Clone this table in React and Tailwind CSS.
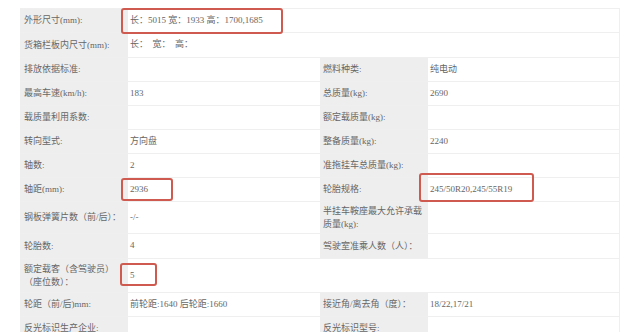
import React from 'react';

const font = { fontFamily: '"Liberation Serif", "Noto Sans CJK SC", serif' };

const rows = [
  { h: 'h-[24px]', l1: '外形尺寸(mm):', v1: '长：5015 宽：1933 高：1700,1685', wide: true },
  { h: 'h-[25px]', l1: '货箱栏板内尺寸(mm):', v1: '长：  宽：  高：', wide: true },
  { h: 'h-[24px]', l1: '排放依据标准:', v1: '', l2: '燃料种类:', v2: '纯电动' },
  { h: 'h-[24px]', l1: '最高车速(km/h):', v1: '183', l2: '总质量(kg):', v2: '2690' },
  { h: 'h-[24px]', l1: '载质量利用系数:', v1: '', l2: '额定载质量(kg):', v2: '' },
  { h: 'h-[24px]', l1: '转向型式:', v1: '方向盘', l2: '整备质量(kg):', v2: '2240' },
  { h: 'h-[24px]', l1: '轴数:', v1: '2', l2: '准拖挂车总质量(kg):', v2: '' },
  { h: 'h-[24px]', l1: '轴距(mm):', v1: '2936', l2: '轮胎规格:', v2: '245/50R20,245/55R19' },
  { h: 'h-[32px]', l1: '钢板弹簧片数（前/后）：', v1: '-/-', l2: <>半挂车鞍座最大允许承载<br />质量(kg):</>, v2: '' },
  { h: 'h-[25px]', l1: '轮胎数:', v1: '4', l2: '驾驶室准乘人数（人）：', v2: '' },
  { h: 'h-[34px]', l1: <>额定载客（含驾驶员）<br />（座位数）：</>, v1: '5', blankRight: true },
  { h: 'h-[24px]', l1: '轮距（前/后)mm:', v1: '前轮距:1640 后轮距:1660', l2: '接近角/离去角（度）：', v2: '18/22,17/21' },
  { h: 'h-[24px]', l1: '反光标识生产企业:', v1: '', l2: '反光标识型号:', v2: '' },
];

function Row({ row }) {
  return (
    <div className={`flex border-b border-[#efefef] ${row.h}`}>
      <div className="w-[108px] shrink-0 bg-[#eeeeee] pl-[4px] flex items-center leading-[13px]">{row.l1}</div>
      {row.wide ? (
        <div className="flex-1 pl-[2px] flex items-center whitespace-pre">{row.v1}</div>
      ) : (
        <>
          <div className="w-[192px] shrink-0 pl-[2px] flex items-center">{row.v1}</div>
          {row.blankRight ? (
            <div className="flex-1" />
          ) : (
            <>
              <div className="w-[108px] shrink-0 bg-[#eeeeee] pl-[3px] flex items-center leading-[13px]">{row.l2}</div>
              <div className="flex-1 pl-[2px] flex items-center">{row.v2}</div>
            </>
          )}
        </>
      )}
    </div>
  );
}

export default function App() {
  return (
    <div className="w-[640px] h-[332px] overflow-hidden bg-white pt-[8px] pl-[20px]" style={font}>
      <div className="relative w-[600px] border-t border-r border-[#efefef] text-[9px] text-[#666666]">
        {rows.map((row, i) => (
          <Row key={i} row={row} />
        ))}
        {/* annotation boxes */}
        <div className="absolute left-[101px] top-[-1px] w-[162px] h-[26px] border-2 border-[#cf5a4f] rounded-[3px]" />
        <div className="absolute left-[101px] top-[169px] w-[52px] h-[23px] border-2 border-[#cf5a4f] rounded-[3px]" />
        <div className="absolute left-[399px] top-[164px] w-[115px] h-[29px] border-2 border-[#cf5a4f] rounded-[3px]" />
        <div className="absolute left-[100px] top-[254px] w-[37px] h-[23px] border-2 border-[#cf5a4f] rounded-[3px]" />
      </div>
    </div>
  );
}
